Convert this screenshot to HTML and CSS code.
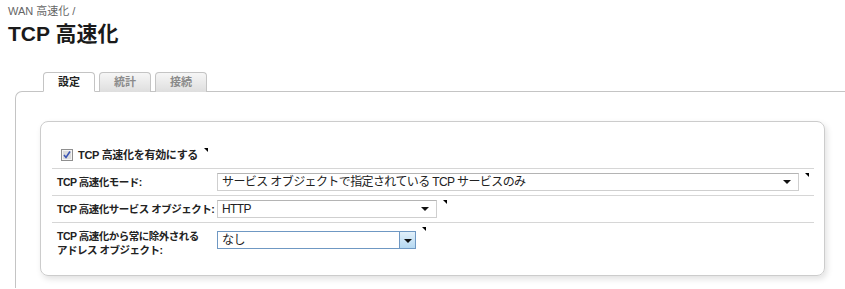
FILE: index.html
```html
<html>
  <head>
    <title>TCP 高速化</title>
    <meta charset="utf-8">
    <link rel="stylesheet" href="styles.css">
  </head>
  <body>
    <div class="crumb">WAN 高速化 /</div>
    <h1>TCP 高速化</h1>

    <div class="tabs">
      <span class="tab active">設定</span>
      <span class="tab">統計</span>
      <span class="tab">接続</span>
    </div>

    <div class="panel">
      <div class="box">
        <div class="row check-row">
          <span class="checkbox">
            <svg width="12" height="12" viewBox="0 0 12 12">
              <rect x="0.5" y="0.5" width="11" height="11" fill="#e9e9e9" stroke="#8f8f8f"/>
              <rect x="1.5" y="1.5" width="9" height="9" fill="#dcdcdc" stroke="#f4f4f4"/>
              <path d="M3 6 L5 8.5 L9 2.5" fill="none" stroke="#3b55b4" stroke-width="1.6"/>
            </svg>
          </span>
          <span class="check-label">TCP 高速化を有効にする</span>
          <span class="mark"></span>
        </div>

        <div class="row">
          <label class="field-label">TCP 高速化モード:</label>
          <div class="select wide">
            <span class="value">サービス オブジェクトで指定されている TCP サービスのみ</span>
            <span class="arrow"></span>
          </div>
          <span class="mark"></span>
        </div>

        <div class="row">
          <label class="field-label">TCP 高速化サービス オブジェクト:</label>
          <div class="select mid">
            <span class="value">HTTP</span>
            <span class="arrow"></span>
          </div>
          <span class="mark"></span>
        </div>

        <div class="row last">
          <label class="field-label two-line">TCP 高速化から常に除外される<br>アドレス オブジェクト:</label>
          <div class="select small focused">
            <span class="value">なし</span>
            <span class="button"><span class="arrow"></span></span>
          </div>
          <span class="mark"></span>
        </div>
      </div>
    </div>
  </body>
</html>
```

FILE: styles.css
```css
body {
  background: #ffffff;
  color: #222222;
  font-family: "Liberation Sans", "Noto Sans CJK JP", sans-serif;
  margin: 0;
  overflow: hidden;
}

.crumb {
  color: #666666;
  font-size: 11px;
  line-height: 13px;
  padding: 5px 8px 0;
}

h1 {
  color: #1a1a1a;
  font-size: 21px;
  font-weight: bold;
  line-height: 24px;
  margin: 4px 0 0 8px;
}

.tabs {
  display: flex;
  gap: 4px;
  margin: 26px 0 -1px 43px;
  position: relative;
  z-index: 1;
}

.tab {
  background: linear-gradient(#f6f6f6, #dedede);
  border: 1px solid #c4c4c4;
  border-bottom: none;
  border-radius: 4px 4px 0 0;
  box-sizing: border-box;
  color: #8a8a8a;
  font-size: 11px;
  font-weight: bold;
  height: 20px;
  line-height: 19px;
  text-align: center;
  width: 52px;
}

.tab.active {
  background: #ffffff;
  border-bottom: 1px solid #ffffff;
  color: #222222;
}

.panel {
  border-left: 1px solid #c4c4c4;
  border-radius: 7px 0 0 0;
  border-top: 1px solid #c4c4c4;
  height: 167px;
  margin-left: 15px;
  padding: 29px 21px 0 24px;
}

.box {
  border: 1px solid #cccccc;
  border-radius: 8px;
  box-shadow: 2px 3px 6px rgba(0, 0, 0, 0.12);
  padding: 20px 10px 18px 11px;
  width: 762px;
}

.row {
  align-items: flex-start;
  border-bottom: 1px solid #d6d6d6;
  display: flex;
  padding: 4px 0 4px 5px;
}

.row.last {
  border-bottom: none;
  padding-bottom: 0;
}

.check-row {
  align-items: center;
  padding: 6px 0 6px 9px;
}

.checkbox {
  display: flex;
  height: 12px;
  margin-right: 5px;
  width: 12px;
}

.check-label {
  font-size: 11px;
  font-weight: bold;
  letter-spacing: -0.3px;
  line-height: 14px;
}

.check-row .mark {
  align-self: flex-start;
}

.field-label {
  flex-shrink: 0;
  font-size: 10.5px;
  font-weight: bold;
  letter-spacing: -0.5px;
  line-height: 18px;
  white-space: nowrap;
  width: 160px;
}

.field-label.two-line {
  line-height: 14px;
  margin-top: 2px;
}

.select {
  align-items: center;
  background: #ffffff;
  border: 1px solid #cfcfcf;
  border-top-color: #b4b4b4;
  box-sizing: border-box;
  display: flex;
  flex-shrink: 0;
  height: 18px;
  justify-content: space-between;
}

.select .value {
  font-size: 12px;
  letter-spacing: -0.6px;
  line-height: 16px;
  padding-left: 4px;
  white-space: nowrap;
}

.select .arrow {
  border-left: 4px solid transparent;
  border-right: 4px solid transparent;
  border-top: 4px solid #111111;
  height: 0;
  margin-right: 7px;
  width: 0;
}

.select.wide {
  width: 582px;
}

.select.mid {
  width: 220px;
}

.select.small {
  margin-top: 4px;
  width: 199px;
}

.select.focused {
  border-color: #6f98c3;
}

.select .button {
  align-items: center;
  align-self: stretch;
  background: linear-gradient(#e2f0fa, #b5d8f1);
  border-left: 1px solid #6f98c3;
  display: flex;
  justify-content: center;
  width: 15px;
}

.select .button .arrow {
  margin: 1px 0 0;
}

.mark {
  border-left: 4px solid transparent;
  border-top: 4px solid #000000;
  height: 0;
  margin-left: 6px;
  width: 0;
}
```
